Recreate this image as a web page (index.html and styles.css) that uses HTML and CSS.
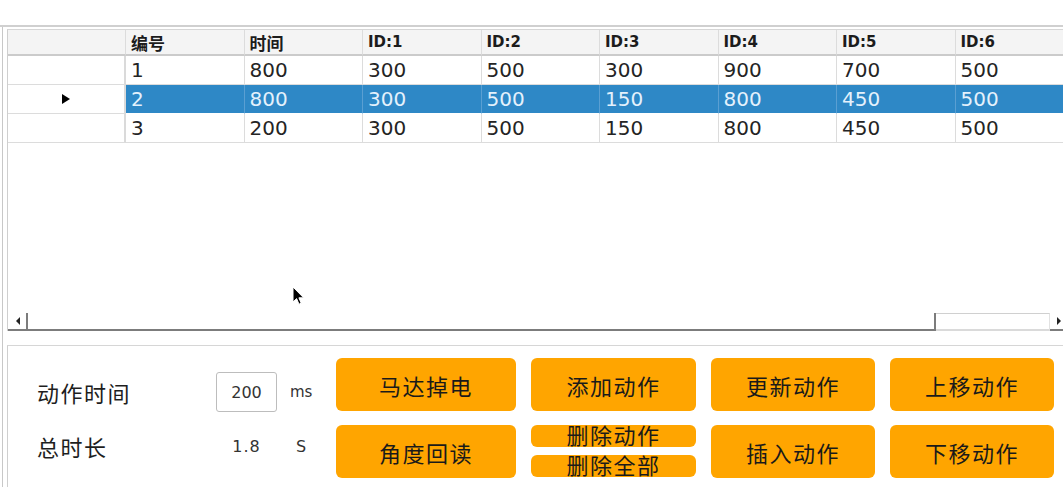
FILE: index.html
```html
<!DOCTYPE html>
<html lang="zh">
<head>
<meta charset="utf-8">
<title>动作编辑</title>
<link rel="stylesheet" href="styles.css">
</head>
<body>
<div class="screen">
  <div class="topbar"></div>
  <div class="frame">
    <div class="grid-view">
      <div class="row head">
        <div class="cell corner"></div>
        <div class="cell cjk">编号</div>
        <div class="cell cjk">时间</div>
        <div class="cell">ID:1</div>
        <div class="cell">ID:2</div>
        <div class="cell">ID:3</div>
        <div class="cell">ID:4</div>
        <div class="cell">ID:5</div>
        <div class="cell">ID:6</div>
      </div>
      <div class="row">
        <div class="cell rowhead"></div>
        <div class="cell">1</div>
        <div class="cell">800</div>
        <div class="cell">300</div>
        <div class="cell">500</div>
        <div class="cell">300</div>
        <div class="cell">900</div>
        <div class="cell">700</div>
        <div class="cell">500</div>
      </div>
      <div class="row sel">
        <div class="cell rowhead"><span class="tri"></span></div>
        <div class="cell">2</div>
        <div class="cell">800</div>
        <div class="cell">300</div>
        <div class="cell">500</div>
        <div class="cell">150</div>
        <div class="cell">800</div>
        <div class="cell">450</div>
        <div class="cell">500</div>
      </div>
      <div class="row">
        <div class="cell rowhead"></div>
        <div class="cell">3</div>
        <div class="cell">200</div>
        <div class="cell">300</div>
        <div class="cell">500</div>
        <div class="cell">150</div>
        <div class="cell">800</div>
        <div class="cell">450</div>
        <div class="cell">500</div>
      </div>
      <div class="filler"></div>
      <div class="hscroll">
        <div class="sb-left"><span class="arrow-l"></span></div>
        <div class="sb-track"></div>
        <div class="sb-thumb"></div>
        <div class="sb-right"><span class="arrow-r"></span></div>
      </div>
    </div>
    <div class="panel">
      <div class="params">
        <div class="label">动作时间</div>
        <div class="input">200</div>
        <div class="unit">ms</div>
        <div class="label">总时长</div>
        <div class="value">1.8</div>
        <div class="unit unit-s">S</div>
      </div>
      <div class="buttons">
        <div class="btn">马达掉电</div>
        <div class="btn">添加动作</div>
        <div class="btn">更新动作</div>
        <div class="btn">上移动作</div>
        <div class="btn">角度回读</div>
        <div class="btn-stack">
          <div class="btn small">删除动作</div>
          <div class="btn small">删除全部</div>
        </div>
        <div class="btn">插入动作</div>
        <div class="btn">下移动作</div>
      </div>
    </div>
  </div>
  <svg class="cursor" width="13" height="20" viewBox="0 0 13 20">
    <path d="M1 1 L1 16 L4.6 12.6 L7 18.2 L9.2 17.2 L6.9 11.8 L11.6 11.8 Z" fill="#000" stroke="#fff" stroke-width="1"/>
  </svg>
</div>
</body>
</html>
```

FILE: styles.css
```css
html, body {
  margin: 0;
  padding: 0;
  background: #ffffff;
}

body {
  font-family: "DejaVu Sans", "Noto Sans CJK SC", sans-serif;
  color: #222;
}

.screen {
  width: 1063px;
  height: 487px;
  position: relative;
  overflow: hidden;
  background: #fff;
}

.topbar {
  height: 25px;
  border-bottom: 2px solid #d0d0d0;
}

.frame {
  margin-left: 2px;
  border-left: 1px solid #c8c8c8;
  padding-left: 4px;
  padding-top: 2px;
  height: 460px;
  box-sizing: border-box;
  display: flex;
  flex-direction: column;
}

.grid-view {
  height: 302px;
  border-left: 1px solid #cfcfcf;
  border-top: 1px solid #d6d6d6;
  display: flex;
  flex-direction: column;
  overflow: hidden;
  box-sizing: border-box;
  background: #fff;
}

.row {
  display: grid;
  grid-template-columns: 118px repeat(8, 118.5px);
  height: 29px;
  flex-shrink: 0;
}

.cell {
  box-sizing: border-box;
  border-right: 1px solid #dcdcdc;
  border-bottom: 1px solid #dcdcdc;
  padding-left: 5px;
  font-size: 20px;
  line-height: 28px;
  white-space: nowrap;
  overflow: hidden;
  color: #242424;
}

.row.head {
  height: 26px;
  background: #f4f4f4;
}

.row.head .cell {
  border-bottom: 2px solid #cbcbcb;
  font-size: 15px;
  font-weight: bold;
  line-height: 25px;
  color: #1c1c1c;
  font-family: "DejaVu Sans", "Noto Sans CJK SC", sans-serif;
}

.row.head .cell.cjk {
  font-family: "Noto Sans CJK SC", sans-serif;
  font-size: 17px;
  line-height: 25px;
}

.cell.rowhead {
  background: #fff;
  display: flex;
  align-items: center;
  justify-content: center;
  padding-left: 0;
  border-right: 2px solid #dadada;
}

.row.sel .cell {
  background: #2e88c6;
  color: #e4f1fc;
  border-right-color: #5a9fd2;
  border-bottom-color: #fff;
}

.row.sel .cell.rowhead {
  background: #fff;
  border-right-color: #dadada;
  border-bottom-color: #dcdcdc;
}

.tri {
  width: 0;
  height: 0;
  border-left: 8px solid #000;
  border-top: 5px solid transparent;
  border-bottom: 5px solid transparent;
}

.filler {
  flex: 1;
}

.hscroll {
  height: 18px;
  display: flex;
  flex-shrink: 0;
}

.sb-left {
  width: 20px;
  box-sizing: border-box;
  border-right: 2px solid #7c7c7c;
  border-bottom: 2px solid #7c7c7c;
  display: flex;
  align-items: center;
  padding-left: 8px;
}

.arrow-l {
  width: 0;
  height: 0;
  border-right: 4px solid #222;
  border-top: 4px solid transparent;
  border-bottom: 4px solid transparent;
}

.sb-track {
  flex: 1;
  border-bottom: 2px solid #7c7c7c;
  border-right: 2px solid #7c7c7c;
}

.sb-thumb {
  width: 114px;
  box-sizing: border-box;
  border-top: 1px solid #d0d0d0;
  border-bottom: 2px solid #dadada;
  border-right: 1px solid #e2e2e2;
  background: #fff;
}

.sb-right {
  width: 13px;
  box-sizing: border-box;
  border-bottom: 2px solid #7c7c7c;
  display: flex;
  align-items: center;
  justify-content: flex-end;
  padding-right: 2px;
}

.arrow-r {
  width: 0;
  height: 0;
  border-left: 4px solid #222;
  border-top: 4px solid transparent;
  border-bottom: 4px solid transparent;
}

.panel {
  margin-top: 14px;
  border-top: 1px solid #d6d6d6;
  border-left: 1px solid #cfcfcf;
  flex: 1;
  display: flex;
}

.params {
  width: 328px;
  display: grid;
  grid-template-columns: 208px 61px 1fr;
  grid-template-rows: 40px 40px;
  row-gap: 14px;
  padding-top: 26px;
  align-items: center;
  align-content: start;
}

.label {
  padding-left: 29px;
  font-family: "Noto Sans CJK SC", sans-serif;
  font-size: 22px;
  letter-spacing: 1.5px;
  color: #1e1e1e;
}

.input {
  height: 40px;
  box-sizing: border-box;
  border: 1px solid #bdbdbd;
  border-radius: 3px;
  display: flex;
  align-items: center;
  justify-content: center;
  font-size: 16px;
  color: #333;
}

.value {
  text-align: center;
  font-size: 16px;
  letter-spacing: 1px;
  color: #333;
}

.unit {
  padding-left: 13px;
  font-size: 15px;
  color: #333;
}

.unit-s {
  padding-left: 19px;
  font-size: 16px;
}

.buttons {
  display: grid;
  grid-template-columns: 180px 165px 164px 164px;
  grid-template-rows: 53px 53px;
  column-gap: 15px;
  row-gap: 14px;
  padding-top: 12px;
  align-content: start;
}

.btn {
  background: #ffa500;
  border-radius: 6px;
  display: flex;
  align-items: center;
  justify-content: center;
  font-family: "Noto Sans CJK SC", sans-serif;
  font-size: 22px;
  letter-spacing: 1.5px;
  color: #1a1a1a;
  box-sizing: border-box;
}

.btn-stack {
  display: flex;
  flex-direction: column;
  row-gap: 8px;
}

.btn.small {
  height: 22px;
  line-height: 22px;
  padding-bottom: 4px;
  border-radius: 6px;
  overflow: visible;
}

.cursor {
  position: absolute;
  left: 292px;
  top: 286px;
}
```
